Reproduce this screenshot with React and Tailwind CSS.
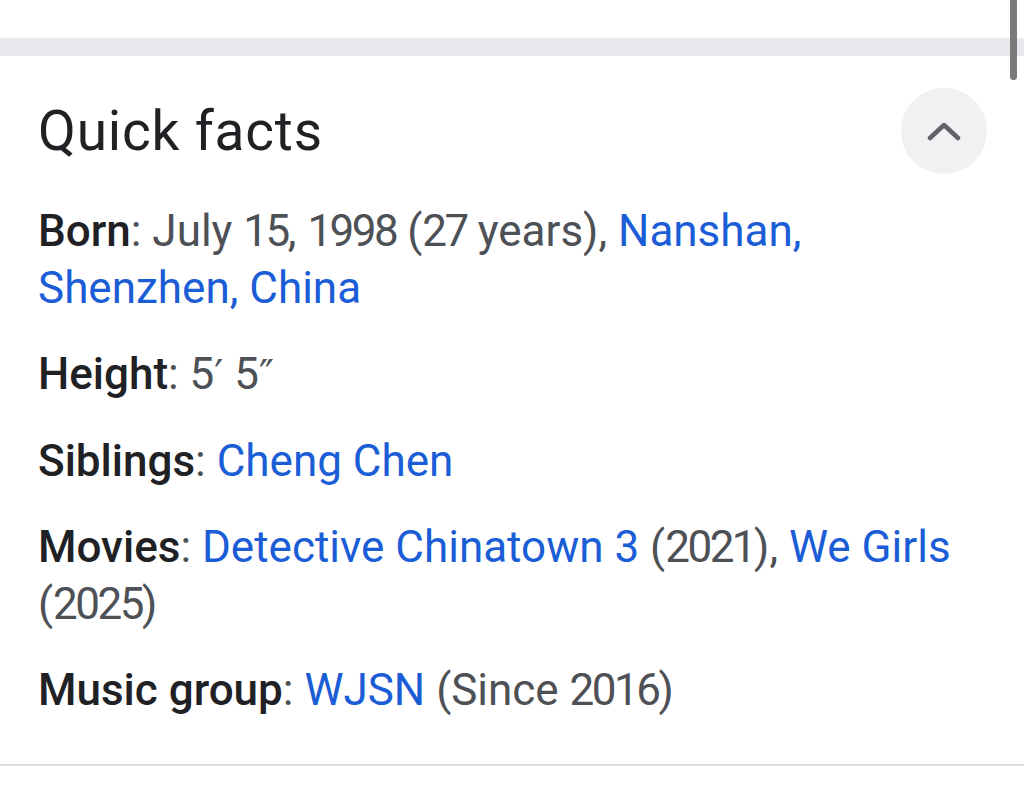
import React from "react";

function Num({ s }) {
  return <span className="tracking-[-2.5px]">{s}</span>;
}

function Label({ children }) {
  return <span className="font-medium text-[#202124]">{children}</span>;
}
function Link({ children }) {
  return <span className="text-[#1a5dd6]">{children}</span>;
}
function Val({ children }) {
  return <span className="text-[#4d5156]">{children}</span>;
}
function Prime({ c }) {
  return <span className="font-['DejaVu_Sans',sans-serif] text-[40px]">{c}</span>;
}

export default function App() {
  return (
    <div
      className="relative w-[1024px] h-[788px] bg-white overflow-hidden"
      style={{ fontFamily: "Roboto, 'Noto Sans', sans-serif" }}
    >
      <div className="h-[38px] bg-white" />
      <div className="h-[18px] bg-[#e9e9ed]" />
      <div className="pl-[38px] pr-[38px] pt-[32px]">
        <div className="flex items-center justify-between">
          <h2 className="text-[55px] leading-[84px] font-normal tracking-[0.8px] text-[#202124]">Quick facts</h2>
          <button className="w-[86px] h-[86px] -mr-[1px] rounded-full bg-[#f1f1f3] flex items-center justify-center">
            <svg width="34" height="20" viewBox="0 0 34 20" fill="none">
              <path d="M3 17 L17 4 L31 17" stroke="#5f6368" strokeWidth="4.5" strokeLinecap="round" strokeLinejoin="round" />
            </svg>
          </button>
        </div>
        <div className="mt-[29px] flex flex-col gap-[29px] text-[44px] leading-[57px] whitespace-nowrap">
          <div>
            <Label>Born</Label>
            <Val>: July <Num s="15" />, <Num s="1998" /> (<Num s="27" /> years), </Val>
            <Link>Nanshan,</Link>
            <br />
            <Link>Shenzhen, China</Link>
          </div>
          <div>
            <Label>Height</Label>
            <Val>: 5<Prime c="′" /> 5<Prime c="″" /></Val>
          </div>
          <div>
            <Label>Siblings</Label>
            <Val>: </Val>
            <Link>Cheng Chen</Link>
          </div>
          <div>
            <Label>Movies</Label>
            <Val>: </Val>
            <Link>Detective Chinatown 3</Link>
            <Val> (<Num s="2021" />), </Val>
            <Link>We Girls</Link>
            <br />
            <Val>(<Num s="2025" />)</Val>
          </div>
          <div>
            <Label>Music group</Label>
            <Val>: </Val>
            <Link>WJSN</Link>
            <Val> (Since <Num s="2016" />)</Val>
          </div>
        </div>
      </div>
      <div className="absolute left-0 right-0 top-[764px] h-[2px] bg-[#dadce0]" />
      <div className="absolute top-0 left-[1010px] w-[7px] h-[80px] rounded-b-full bg-[#7a7a7a]" />
    </div>
  );
}
